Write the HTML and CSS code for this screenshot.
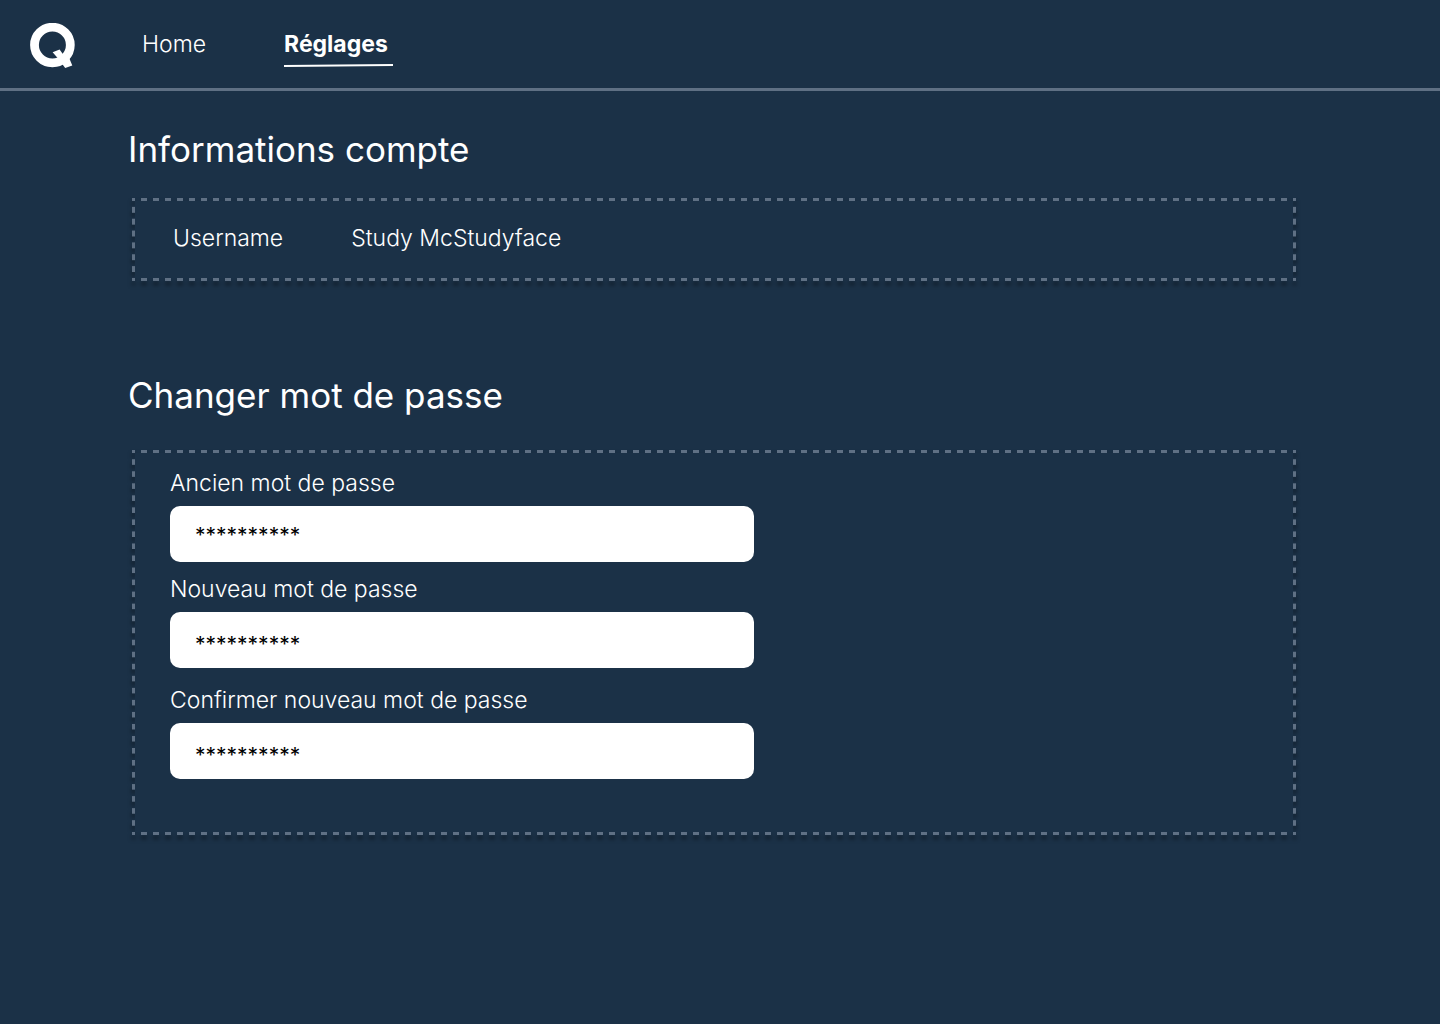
FILE: index.html
```html
<!DOCTYPE html>
<html lang="fr">
<head>
  <meta charset="utf-8">
  <meta name="viewport" content="width=device-width, initial-scale=1">
  <title>Réglages</title>
  <link rel="stylesheet" href="styles.css">
</head>
<body>
  <header class="topbar">
    <a class="logo" href="#" aria-label="Accueil">
      <svg width="46" height="46" viewBox="0 0 46 46" fill="none" aria-hidden="true">
        <ellipse cx="22.4" cy="22" rx="17.9" ry="17.8" stroke="#fff" stroke-width="8.8"/>
        <path d="M22.6 29.2 29.6 26.6 33 31.2 37 29.8 42.3 42.6 35.2 45 32.6 41.6 27.2 34.6Z" fill="#fff"/>
      </svg>
    </a>
    <nav class="nav">
      <a class="nav-link" href="#">Home</a>
      <a class="nav-link nav-link--active" href="#" aria-current="page">
        Réglages
        <svg class="nav-line" viewBox="0 0 109 3" preserveAspectRatio="none" aria-hidden="true">
          <path d="M0 2 109 1" stroke="#fff" stroke-width="2"/>
        </svg>
      </a>
    </nav>
  </header>

  <main class="content">
    <section class="section">
      <h1 class="section-title">Informations compte</h1>
      <dl class="panel panel--account">
        <dt class="account-label">Username</dt>
        <dd class="account-value">Study McStudyface</dd>
      </dl>
    </section>

    <section class="section section--password">
      <h2 class="section-title">Changer mot de passe</h2>
      <form class="panel panel--form">
        <div class="field field--current">
          <label class="field-label" for="old">Ancien mot de passe</label>
          <input class="field-input" id="old" type="text" value="**********" autocomplete="off">
        </div>
        <div class="field">
          <label class="field-label" for="new">Nouveau mot de passe</label>
          <input class="field-input" id="new" type="text" value="**********" autocomplete="off">
        </div>
        <div class="field">
          <label class="field-label" for="confirm">Confirmer nouveau mot de passe</label>
          <input class="field-input" id="confirm" type="text" value="**********" autocomplete="off">
        </div>
      </form>
    </section>
  </main>
</body>
</html>
```
FILE: styles.css
```css
:root {
  --navy: #1b3147;
  --slate: #5f7084;
}

* {
  box-sizing: border-box;
}

body {
  margin: 0;
  min-height: 100vh;
  background: var(--navy);
  color: #fff;
  font-family: Inter, sans-serif;
  font-size: 23px;
  font-weight: 300;
  line-height: 32px;
}

.topbar {
  display: flex;
  align-items: flex-start;
  gap: 66px;
  padding: 23px 30px 19px;
  border-bottom: 3px solid var(--slate);
}

.logo,
.logo svg {
  display: block;
}

.nav {
  display: flex;
  gap: 78px;
  padding-top: 5px;
}

.nav-link {
  display: flex;
  flex-direction: column;
  color: inherit;
  text-decoration: none;
}

.nav-link--active {
  font-weight: 700;
}

.nav-line {
  width: 109px;
  height: 3px;
  margin-top: 4px;
}

.content {
  padding: 34px 144px 64px 128px;
}

.section--password {
  margin-top: 90px;
}

.section-title {
  margin: 0 0 25px;
  font-size: 35px;
  font-weight: 400;
  line-height: 48px;
}

.section--password .section-title {
  margin-bottom: 31px;
}

.panel {
  position: relative;
  isolation: isolate;
  margin: 0 0 0 4px;
}

/* dashed outline: half dashes meet in the corners */
.panel::before {
  content: "";
  position: absolute;
  inset: 0;
  z-index: -1;
  background:
    linear-gradient(90deg, var(--slate) 25%, transparent 25% 75%, var(--slate) 75%) left top / 12px 3px round no-repeat,
    linear-gradient(90deg, var(--slate) 25%, transparent 25% 75%, var(--slate) 75%) left bottom / 12px 3px round no-repeat,
    linear-gradient(var(--slate) 25%, transparent 25% 75%, var(--slate) 75%) left top / 3px 12px no-repeat round,
    linear-gradient(var(--slate) 25%, transparent 25% 75%, var(--slate) 75%) right top / 3px 12px no-repeat round;
  filter: drop-shadow(0 4px 2px rgba(0, 0, 0, 0.5));
}

/* the fill keeps the shadow outside the outline */
.panel::after {
  content: "";
  position: absolute;
  inset: 3px;
  z-index: -1;
  background: var(--navy);
}

.panel--account {
  display: flex;
  gap: 68px;
  padding: 24px 41px 27px;
}

.account-value {
  margin: 0;
}

.panel--form {
  display: flex;
  flex-direction: column;
  gap: 16px;
  padding: 17px 38px 56px;
}

.field {
  display: flex;
  flex-direction: column;
  gap: 7px;
  max-width: 584px;
}

.field--current {
  margin-bottom: -5px;
}

.field-input {
  width: 100%;
  height: 56px;
  padding: 8px 25px 0;
  border: 0;
  border-radius: 10px;
  background: #fff;
  color: #000;
  font: inherit;
  font-size: 21px;
  font-weight: 400;
}

.field--current .field-input {
  padding-top: 2px;
}
```
